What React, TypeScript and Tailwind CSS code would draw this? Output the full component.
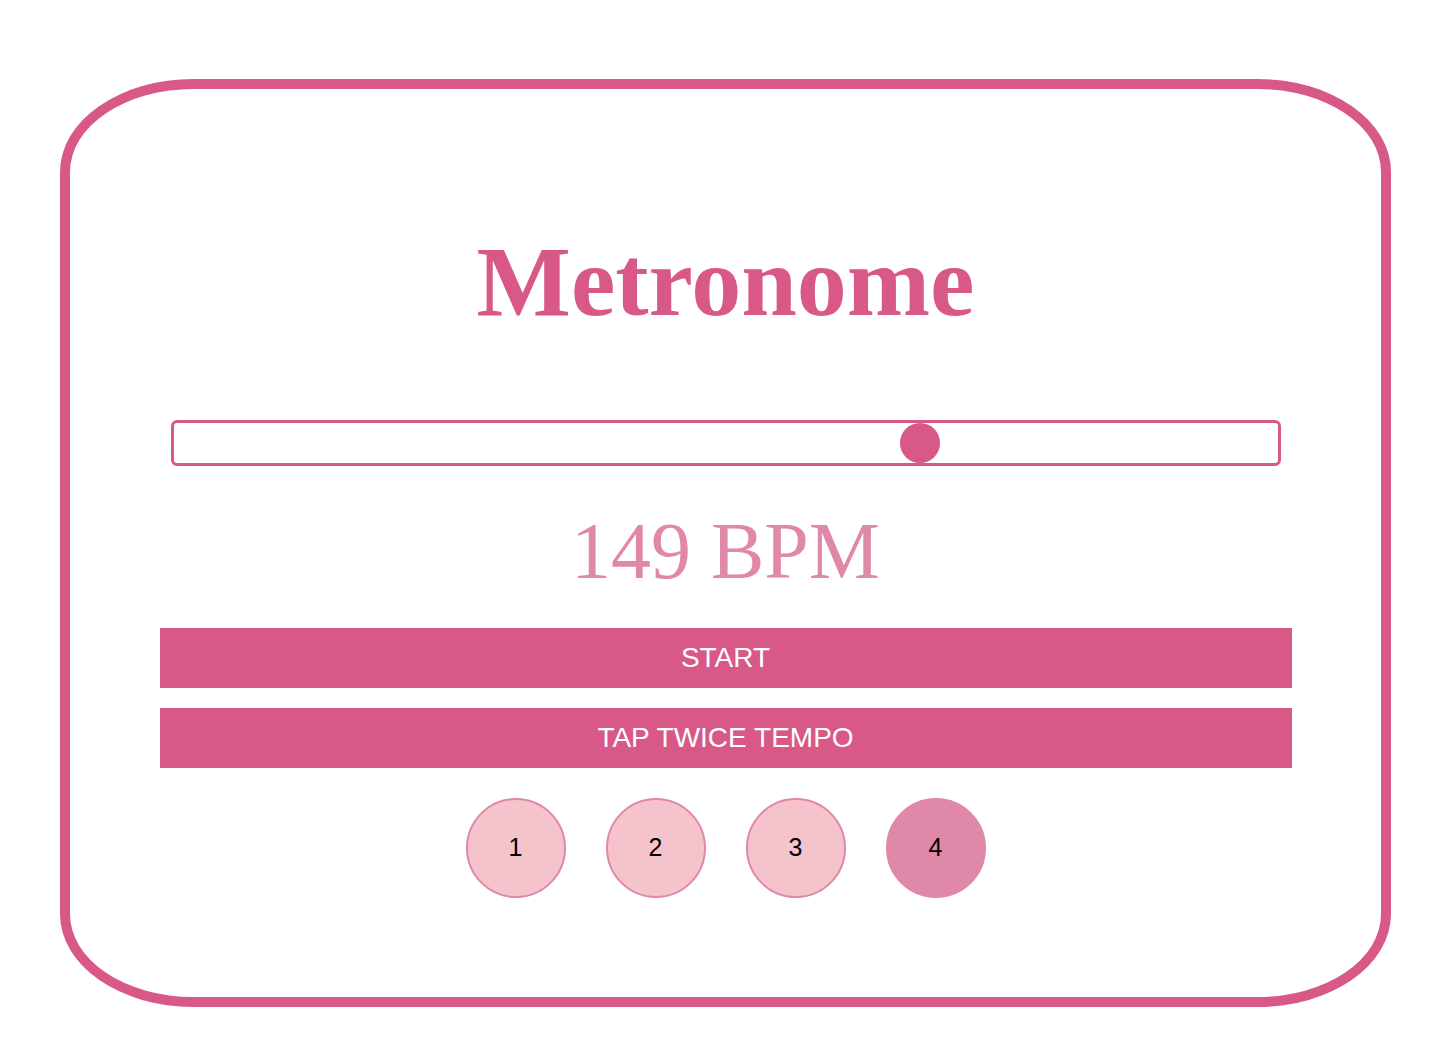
const beats = [1, 2, 3, 4];

export default function App() {
  const current = 4;

  return (
    <div className="min-h-screen bg-white pl-[60px] pr-[59px] pt-[79px] pb-[49px]">
      <div className="flex h-[928px] flex-col items-center rounded-[10%] border-[10px] border-[#d85887]">
        <h1 className="mt-[143px] text-[100px] font-bold leading-none text-[#d85887] [font-family:'Liberation_Serif',serif]">
          Metronome
        </h1>

        {/* tempo slider */}
        <div className="relative mt-[88px] h-[46px] w-[1110px] rounded-[6px] border-[3px] border-[#d85887] bg-white">
          <div className="absolute left-[726px] top-1/2 h-10 w-10 -translate-y-1/2 rounded-full bg-[#d85887]" />
        </div>

        <div className="mt-[45px] text-[80px] leading-none text-[#e088a9] [font-family:'Liberation_Serif',serif]">
          149 BPM
        </div>

        <div className="mt-[37px] flex w-[1132px] flex-col gap-5 [font-family:'Liberation_Sans',Arial,sans-serif]">
          <button className="h-[60px] w-full bg-[#d85887] text-[28px] text-white">START</button>
          <button className="h-[60px] w-full bg-[#d85887] text-[28px] text-white">TAP TWICE TEMPO</button>
        </div>

        <div className="mt-[30px] flex gap-10 [font-family:'Liberation_Sans',Arial,sans-serif]">
          {beats.map((b) => (
            <div
              key={b}
              className={
                b === current
                  ? "flex h-[100px] w-[100px] items-center justify-center rounded-full border-2 border-[#e088a9] bg-[#e088a9] text-[25px] text-black"
                  : "flex h-[100px] w-[100px] items-center justify-center rounded-full border-2 border-[#e088a9] bg-[#f5c3cc] text-[25px] text-black"
              }
            >
              {b}
            </div>
          ))}
        </div>
      </div>
    </div>
  );
}
